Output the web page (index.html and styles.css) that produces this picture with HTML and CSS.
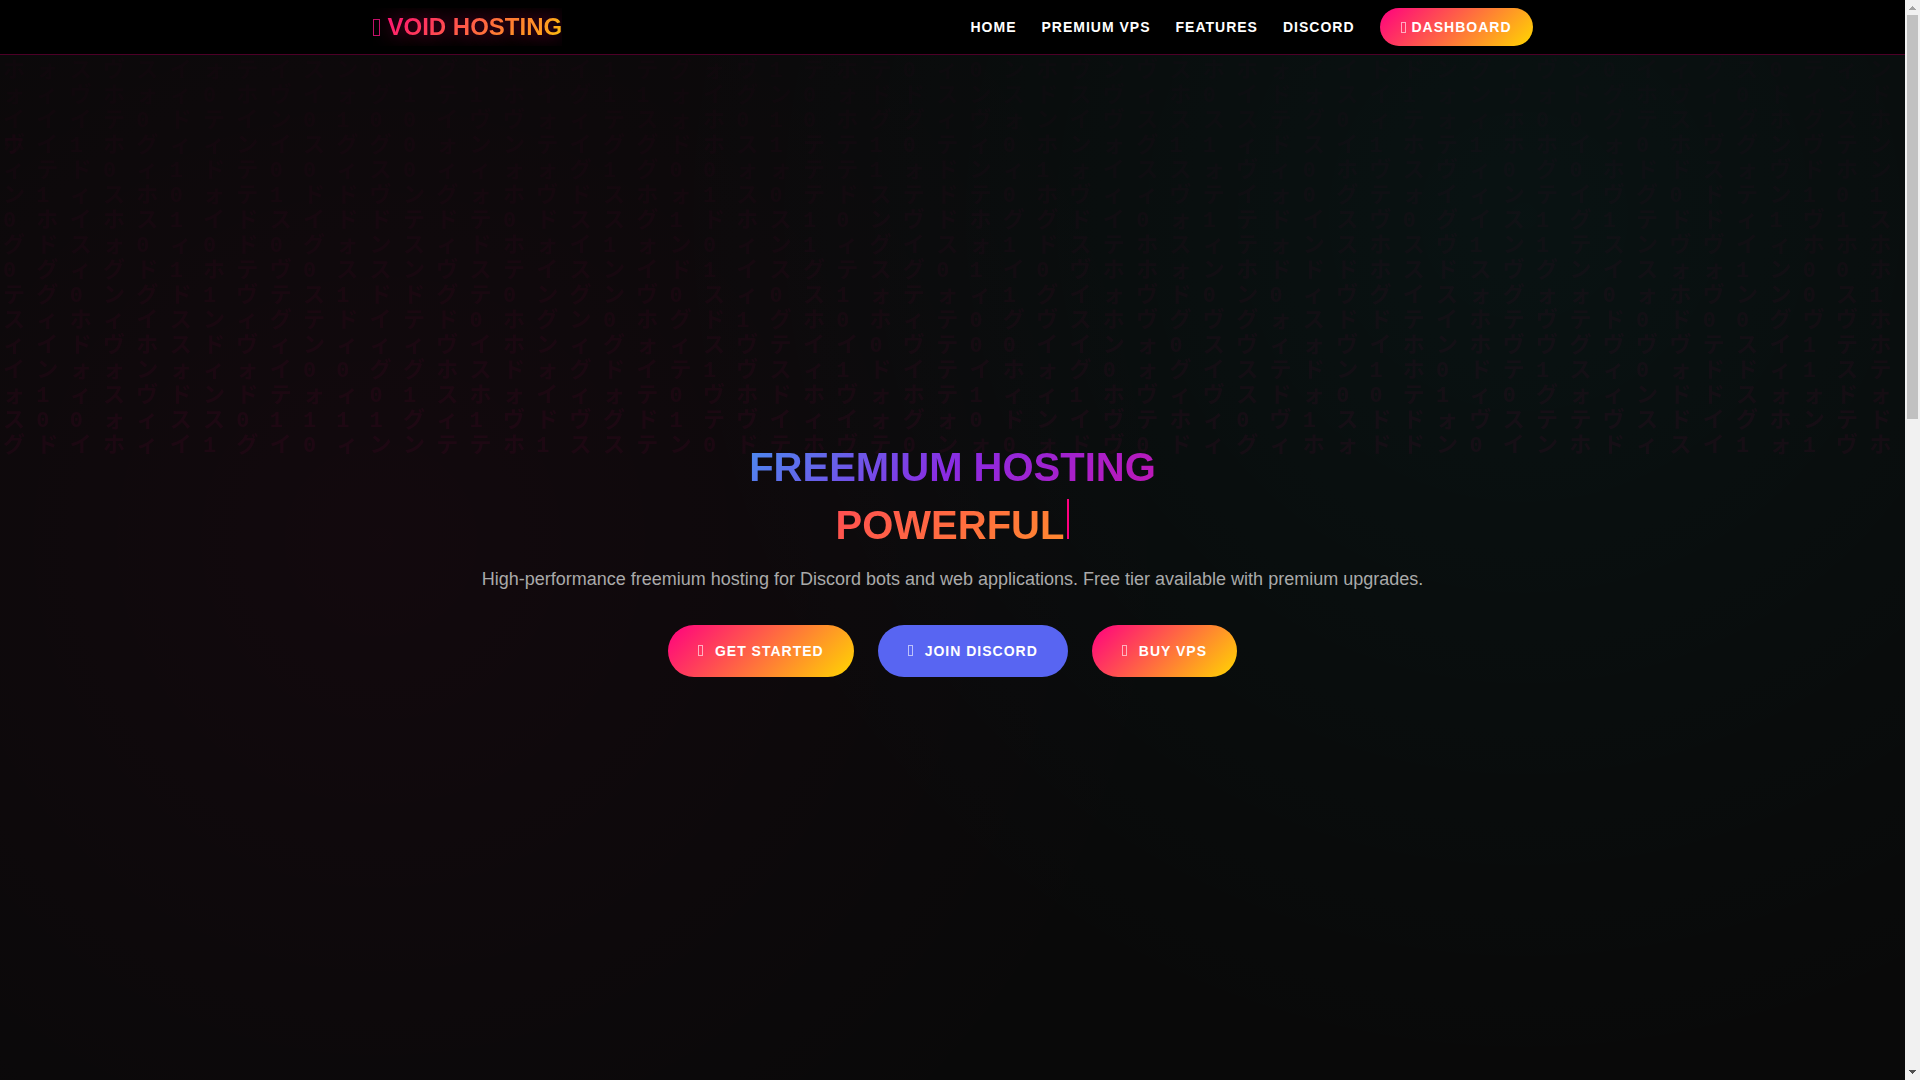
FILE: index.html
```html
<!DOCTYPE html>
<html lang="en">
<head>
  <meta charset="UTF-8">
  <meta name="viewport" content="width=device-width, initial-scale=1.0">
  <title>Void Hosting</title>
  <link rel="stylesheet" href="styles.css">
</head>
<body>
<div class="page">
  <header class="header">
    <nav class="nav">
      <a href="#" class="logo"><svg class="logo-icon" viewBox="0 0 7 17"><rect x="0.5" y="0.5" width="6" height="16"/></svg>VOID HOSTING</a>
      <div class="nav-links">
        <a href="#home">Home</a>
        <a href="#vps">Premium VPS</a>
        <a href="#features">Features</a>
        <a href="#discord">Discord</a>
        <a href="#dashboard" class="nav-dashboard"><svg class="icon" viewBox="0 0 5 11"><rect x="0.5" y="0.5" width="4" height="10"/></svg>Dashboard</a>
      </div>
    </nav>
  </header>

  <main class="hero" id="home">
    <div class="rain" id="rain" aria-hidden="true"></div>

    <div class="hero-content">
      <h1 class="hero-title">
        <span class="title-main">FREEMIUM HOSTING</span>
        <span class="title-typed"><span class="typed">POWERFUL</span><span class="cursor"></span></span>
      </h1>
      <p class="hero-text">High-performance freemium hosting for Discord bots and web applications. Free tier available with premium upgrades.</p>
      <div class="hero-buttons">
        <a href="#start" class="btn"><svg class="icon" viewBox="0 0 5 11"><rect x="0.5" y="0.5" width="4" height="10"/></svg>Get Started</a>
        <a href="#discord" class="btn btn-discord"><svg class="icon" viewBox="0 0 5 11"><rect x="0.5" y="0.5" width="4" height="10"/></svg>Join Discord</a>
        <a href="#vps" class="btn"><svg class="icon" viewBox="0 0 5 11"><rect x="0.5" y="0.5" width="4" height="10"/></svg>Buy VPS</a>
      </div>
    </div>
  </main>
</div>

<!-- Scrollbar -->
<div class="scrollbar" aria-hidden="true">
  <svg class="arrow arrow-up" viewBox="0 0 15 15"><path d="M4 10h7v-1h-1v-1h-1v-1h-1v-1h-1v1h-1v1h-1v1h-1z"/></svg>
  <div class="track"><div class="thumb"></div></div>
  <svg class="arrow arrow-down" viewBox="0 0 15 15"><path d="M4 5h7v1h-1v1h-1v1h-1v1h-1v-1h-1v-1h-1v-1h-1z"/></svg>
</div>

<script>
  // Matrix rain
  const rows = [
    'ホォスヴスイォテイスン0ングドドホイ1テグォヴ1テホテ0ィ0ンホヴンヴスホホォイイドドングィヴン0イィグス0ティン',
    'ォィヴホォィ0ホヴイォグ1テ1ホイグ11ォイグン0ォドドスンスドスヴィホ0イドォスイ1ォンヴォドグホヴィ0ドィンド',
    'イイイテ0ドテイン0100イヴヴォィテスォホ010ホググィヴォンイヴスススステグ0ィテォィホ00グテス1グホグスホホ',
    'ヴイ1ホグィィンイスググ0ォンンテイググドホス1テテ10ティ0ホンォグ11ィドスイ1ホテ1ホホイォ0ホヴグンヴテン',
    'ィテド0ィ1ドテ00ィス0ィィォォグ1グ00ォォテテ1ォドンィ1ォイススォヴィ0ホヴスヴィ0グ0ホドドスォヴドホン',
    'ン1ィスホ0ォテ1ドドヴングォホヴドスホォ1ス0テドステドテ0ホヴィィヴテイォ0グテォイィンテイヴグ0ドテン101',
    '0ホイホス1イドスイドドテドテ0ドススグ1ドホス10ンヴドホググドイ0ォ1テドイスヴ0グイス1グ1テドドィ1ヴ1ス',
    'グドスォ0ィ0ド0グォンスィドホォイ1ォン0ィン1ィグイスォ1ドステホスィテォンスホスヴ1ン1テスンヴヴイィホホホ',
    '0グィグド1ホテヴ0ススンヴステイスンイド1イスグテスグ01イ0ヴホホォンホドドドホスドスヴグンイスォォ1ン00ホ',
    'テグ0ングド1ヴテス1ドドグテ0ングンヴ0スィ0ス1ォテォィ1グイォヴド0ン0ィヴグイスォグォォ0ォホヴンン0ス1',
    'スィホィイスンィグテドイテド0ホグン0ホグド1グホ0ホィテ0グヴスホヴグヴグォスドドテイホテヴテド0ド00グヴヴホ',
    'ィイドヴホスドヴィンィィィヴイホンィグォィスヴテイイ0ヴテ00イインォ0スヴィォヴイホンホヴヴグヴヴヴテスイ1テホ',
    'インォォンォィォイ00ググホスドォグドイテ1ヴスィ1ドイテイホォグ0ォグイステドン1ホ0ドテ1スィ0ォドドィ1ステ',
    'ォ1ィスヴドンドテォィ01スホォイィォテ0ヴホドホヴォホテ1ィィ1ホヴィヴスドォ00テ1ィ0グォィンドドスォォドォ',
    'ス00ォィスス01111グィ1ヴドヴグド1テヴイィイォグォ0ドンイヴテホィ0ヴ1スドドォヴステテヴスドイグホンテド',
    'グドイホィイ1グイ0ィンンテテホ1スステン0ドテホヴテ0ンォ0ォドヴ0ドィグィホォドドン0インホドィスイ1ォ1ヴホ'
  ];

  const rain = document.getElementById('rain');

  rows.forEach((row, i) => {
    const line = document.createElement('div');
    line.className = 'rain-row';
    line.style.opacity = 0.015 + i * 0.0025;
    for (const char of row) {
      const cell = document.createElement('span');
      cell.textContent = char;
      line.appendChild(cell);
    }
    rain.appendChild(line);
  });
</script>
</body>
</html>
```

FILE: styles.css
```css
* {
  box-sizing: border-box;
  margin: 0;
  padding: 0;
}

body {
  display: flex;
  min-height: 100vh;
  font-family: "Liberation Sans", Arial, sans-serif;
  line-height: 1.6;
  color: #fff;
  background: #0a0a0a;
}

a {
  color: inherit;
  text-decoration: none;
}

.page {
  flex: 1;
  min-width: 0;
  display: flex;
  flex-direction: column;
  background:
    radial-gradient(circle at 20% 50%, rgba(255, 0, 128, 0.04) 0%, transparent 50%),
    radial-gradient(circle at 80% 20%, rgba(0, 255, 255, 0.04) 0%, transparent 50%),
    #090909;
}

/* Header */
.header {
  background: #000;
  border-bottom: 1px solid rgba(255, 0, 128, 0.3);
}

.nav {
  display: flex;
  justify-content: space-between;
  align-items: center;
  max-width: 1200px;
  margin: 0 auto;
  padding: 8px 20px;
}

.logo {
  display: flex;
  align-items: center;
  gap: 8px;
  overflow: hidden;
  font-size: 24px;
  font-weight: bold;
  background: linear-gradient(135deg, #ff0080, #ffd700);
  -webkit-background-clip: text;
  background-clip: text;
  -webkit-text-fill-color: transparent;
  text-shadow: 0 0 20px rgba(255, 0, 128, 0.5);
}

.logo-icon {
  width: 7px;
  height: 17px;
  fill: none;
  stroke: #c4126a;
}

.nav-links {
  display: flex;
  align-items: center;
  gap: 25px;
  font-size: 14px;
  font-weight: bold;
  letter-spacing: 1px;
  text-transform: uppercase;
}

.nav-dashboard {
  display: flex;
  align-items: center;
  gap: 6px;
  padding: 8px 21px;
  border-radius: 25px;
  background: linear-gradient(135deg, #ff0080, #ffd700);
}

/* Hero */
.hero {
  position: relative;
  flex: 1;
  display: flex;
  justify-content: center;
  align-items: center;
  padding: 0 20px 16px;
}

.hero-content {
  position: relative;
  text-align: center;
}

.hero-title {
  font-size: 40px;
  line-height: 48px;
}

.title-main,
.title-typed {
  display: block;
}

.title-main {
  margin-bottom: 8px;
  background: linear-gradient(135deg, #00ffff, #8a2be2, #ff0080);
  -webkit-background-clip: text;
  background-clip: text;
  -webkit-text-fill-color: transparent;
}

.title-typed {
  margin-bottom: 16px;
  background: linear-gradient(135deg, #ff0080, #ffd700);
  -webkit-background-clip: text;
  background-clip: text;
  -webkit-text-fill-color: transparent;
}

.cursor {
  display: inline-block;
  width: 2px;
  height: 40px;
  margin-left: 3px;
  background: #ff0080;
}

.hero-text {
  margin-bottom: 32px;
  font-size: 18px;
  line-height: 28px;
  color: #aaa;
}

.hero-buttons {
  display: flex;
  justify-content: center;
  flex-wrap: wrap;
  gap: 24px;
}

.btn {
  display: flex;
  align-items: center;
  gap: 12px;
  padding: 15px 30px;
  border-radius: 30px;
  background: linear-gradient(135deg, #ff0080, #ffd700);
  font-size: 14px;
  font-weight: bold;
  letter-spacing: 1px;
  text-transform: uppercase;
}

.btn-discord {
  background: #5865f2;
}

.icon {
  width: 5px;
  height: 11px;
  fill: none;
  stroke: rgba(255, 255, 255, 0.6);
}

/* Matrix rain */
.rain {
  position: absolute;
  top: 4px;
  left: 0;
  width: 100%;
  pointer-events: none;
  color: #ff0080;
  font-family: "Liberation Mono", "Noto Sans CJK JP", monospace;
  font-size: 22px;
  font-weight: bold;
  line-height: 25px;
}

.rain-row {
  display: grid;
  grid-template-columns: repeat(57, 1.75%);
  height: 25px;
}

.rain-row span {
  padding-left: 3px;
}

/* Scrollbar */
.scrollbar {
  display: flex;
  flex-direction: column;
  width: 15px;
  background: #f1f1f1;
}

.arrow {
  width: 15px;
  height: 15px;
}

.arrow-up {
  fill: #a3a3a3;
}

.arrow-down {
  fill: #505050;
}

.track {
  flex: 1;
  display: flex;
  padding: 0 2px;
}

.thumb {
  width: 100%;
  height: 38.5%;
  background: #c1c1c1;
}
```
